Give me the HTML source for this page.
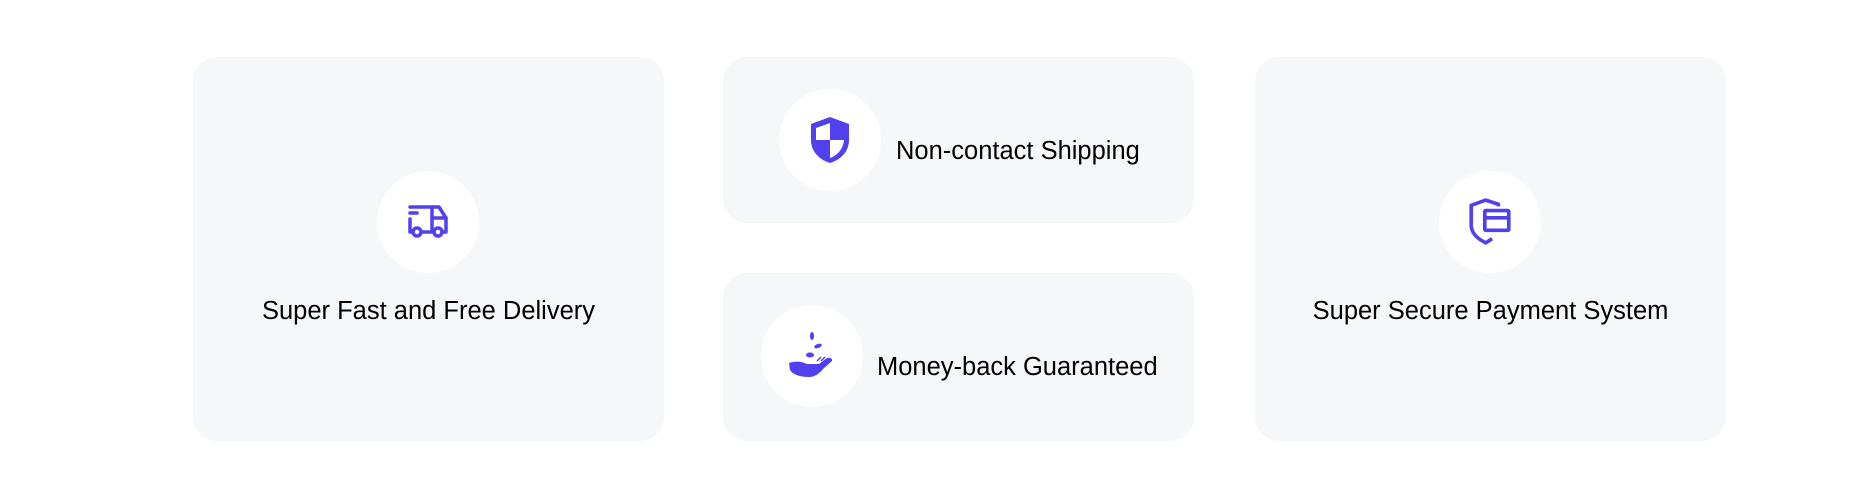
<!DOCTYPE html>
<html><head><style>
body{margin:0;width:1865px;height:504px;background:#fff;position:relative;font-family:"Liberation Sans",sans-serif;overflow:hidden}
.card{position:absolute;background:#f6f7f9;border-radius:24px}
.circ{position:absolute;width:102px;height:102px;border-radius:50%;background:#fff;display:flex;align-items:center;justify-content:center}
.t{position:absolute;font-size:25.5px;color:#000;white-space:nowrap;line-height:1}
.c{text-align:center;width:471px}
</style></head><body>
<div class="card" style="left:193px;top:57px;width:471px;height:384px"></div>
<div class="card" style="left:723px;top:57px;width:471px;height:166px"></div>
<div class="card" style="left:723px;top:273px;width:471px;height:168px"></div>
<div class="card" style="left:1255px;top:57px;width:471px;height:384px"></div>

<div class="circ" style="left:377px;top:171px">
<svg width="44" height="36" viewBox="0 0 44 36" fill="none" stroke="#5140ee" stroke-width="3.5" stroke-linecap="round" stroke-linejoin="round">
<path d="M4 3H26V28H16"/><path d="M26 3H33L40 14V28H36"/><path d="M26 14H40"/><path d="M4 9H11"/><path d="M4 15V28H7"/>
<circle cx="11" cy="28" r="4"/><circle cx="32" cy="28" r="4"/></svg></div>
<div class="t c" style="left:193px;top:299px">Super Fast and Free Delivery</div>

<div class="circ" style="left:779px;top:89px">
<svg width="40" height="48" viewBox="0 0 40 48"><path d="M20 1L39 8V24C39 36 30 44 20 47C10 44 1 36 1 24V8Z" fill="#5140ee"/><path d="M6 12L20 7V24H6Z" fill="#fff"/><path d="M20 24H34C33 33 28 39 20 42Z" fill="#fff"/></svg></div>
<div class="t" style="left:896px;top:139px">Non-contact Shipping</div>

<div class="circ" style="left:761px;top:305px">
<svg width="50" height="50" viewBox="0 0 50 50" fill="#5140ee"><ellipse cx="25" cy="5" rx="2" ry="4"/><ellipse cx="31" cy="15" rx="4" ry="2" transform="rotate(-20 31 15)"/><ellipse cx="23" cy="24" rx="4" ry="2.5"/>
<path d="M2 32C8 30 14 30 20 33L32 33L40 27C43 26 46 28 45 30L36 38C33 42 28 46 22 46C14 46 6 44 3 39Z"/><path d="M30 30L34 26M34 30L38 26" stroke="#5140ee" stroke-width="1.5"/></svg></div>
<div class="t" style="left:877px;top:355px">Money-back Guaranteed</div>

<div class="circ" style="left:1439px;top:171px">
<svg width="46" height="48" viewBox="0 0 44 46" fill="none" stroke="#5140ee" stroke-width="3.5" stroke-linejoin="round"><path d="M30 8V6L18 2L4 7V26C4 34 10 39 18 43L24 39"/><rect x="17" y="12" width="23" height="19" rx="1"/><path d="M17 19H40"/></svg></div>
<div class="t c" style="left:1255px;top:299px">Super Secure Payment System</div>
</body></html>
